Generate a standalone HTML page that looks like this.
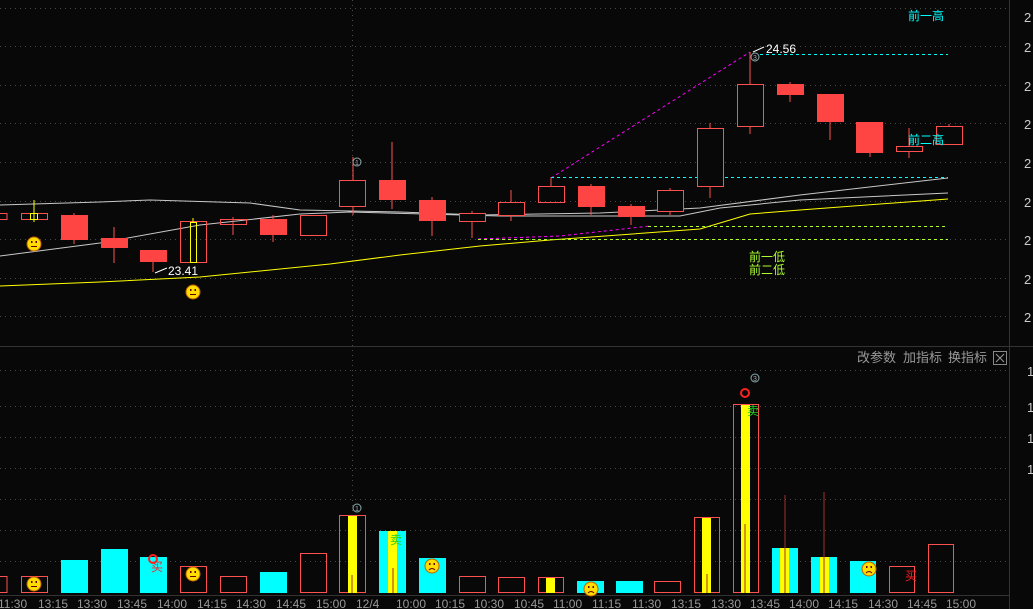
<!DOCTYPE html>
<html><head><meta charset="utf-8"><style>
html,body{margin:0;padding:0;background:#080808;overflow:hidden}
svg{display:block}
text{font-family:"Liberation Sans","Noto Sans CJK SC",sans-serif}
</style></head><body>
<svg width="1033" height="609" viewBox="0 0 1033 609" xmlns="http://www.w3.org/2000/svg">
<defs>
<g id="sm"><circle r="7" fill="#ffdd00" stroke="#c06000"/><rect x="-3" y="-3" width="1.5" height="2" fill="#600"/><rect x="1.5" y="-3" width="1.5" height="2" fill="#600"/><line x1="-3" y1="2.5" x2="3" y2="2.5" stroke="#600"/></g>
<g id="sd"><circle r="7" fill="#ffdd00" stroke="#c06000"/><rect x="-3" y="-3" width="1.5" height="2" fill="#600"/><rect x="1.5" y="-3" width="1.5" height="2" fill="#600"/><path d="M-3,4 Q0,1 3,4" fill="none" stroke="#600"/></g>
</defs>
<rect width="1033" height="609" fill="#080808"/>
<g stroke="#4a4a4a" stroke-dasharray="1,4" stroke-width="1">
<line x1="0" y1="8.5" x2="1009" y2="8.5"/><line x1="0" y1="46.5" x2="1009" y2="46.5"/>
<line x1="0" y1="85.5" x2="1009" y2="85.5"/><line x1="0" y1="123.5" x2="1009" y2="123.5"/>
<line x1="0" y1="162.5" x2="1009" y2="162.5"/><line x1="0" y1="201.5" x2="1009" y2="201.5"/>
<line x1="0" y1="239.5" x2="1009" y2="239.5"/><line x1="0" y1="278.5" x2="1009" y2="278.5"/>
<line x1="0" y1="316.5" x2="1009" y2="316.5"/>
<line x1="0" y1="370.5" x2="1009" y2="370.5"/><line x1="0" y1="406.5" x2="1009" y2="406.5"/>
<line x1="0" y1="437.5" x2="1009" y2="437.5"/><line x1="0" y1="468.5" x2="1009" y2="468.5"/>
<line x1="0" y1="499.5" x2="1009" y2="499.5"/><line x1="0" y1="530.5" x2="1009" y2="530.5"/>
<line x1="0" y1="561.5" x2="1009" y2="561.5"/>
<line x1="352.5" y1="0" x2="352.5" y2="595"/>
</g>
<line x1="1009.5" y1="0" x2="1009.5" y2="609" stroke="#333"/>
<line x1="0" y1="346.5" x2="1033" y2="346.5" stroke="#333"/>
<line x1="0" y1="595.5" x2="1009" y2="595.5" stroke="#333"/>
<g fill="#ccc" font-size="13"><text x="1024" y="52">2</text><text x="1024" y="91">2</text><text x="1024" y="129">2</text><text x="1024" y="168">2</text><text x="1024" y="207">2</text><text x="1024" y="245">2</text><text x="1024" y="284">2</text><text x="1024" y="322">2</text><text x="1024" y="22">2</text>
<text x="1027" y="376">1</text><text x="1027" y="412">1</text><text x="1027" y="443">1</text><text x="1027" y="474">1</text></g>
<polyline fill="none" stroke="#c8c8c8" points="0,205 100,202 150,200 250,203 300,210 400,212 480,215 600,213 700,208 800,195 948,178"/>
<polyline fill="none" stroke="#c8c8c8" points="0,256 100,243 200,225 300,214 350,212 500,216 680,216 720,208 800,200 948,193"/>
<polyline fill="none" stroke="#ffff00" points="0,286 100,282 200,277 330,264 400,255 480,246 550,240 700,229 750,214 800,210 948,199"/>
<g fill="none" stroke-dasharray="3,3">
<line x1="551" y1="178" x2="750" y2="52" stroke="#ff00ff"/>
<polyline points="478,239 560,236 650,226" stroke="#ff00ff"/>
<line x1="551" y1="177.5" x2="948" y2="177.5" stroke="#00ffff"/>
<line x1="760" y1="54.5" x2="948" y2="54.5" stroke="#00ffff"/>
<line x1="648" y1="226.5" x2="948" y2="226.5" stroke="#adff2f"/>
<line x1="478" y1="239.5" x2="948" y2="239.5" stroke="#adff2f"/>
</g>
<g stroke="#ff5050" fill="none">
<line x1="34" y1="200" x2="34" y2="222" stroke="#ffff00"/><rect x="21.5" y="213.5" width="26" height="6"/><rect x="30.5" y="213.5" width="7" height="6" stroke="#ffff00"/>
<rect x="-5" y="213.5" width="12" height="6"/>
<line x1="74" y1="213" x2="74" y2="244"/><rect x="61" y="215" width="27" height="25" fill="#ff4444" stroke="none"/>
<line x1="114" y1="227" x2="114" y2="263"/><rect x="101" y="238" width="27" height="10" fill="#ff4444" stroke="none"/>
<line x1="153" y1="250" x2="153" y2="272"/><rect x="140" y="250" width="27" height="12" fill="#ff4444" stroke="none"/>
<rect x="180.5" y="221.5" width="26" height="41"/><rect x="190.5" y="222.5" width="6" height="40" stroke="#ffff00"/><line x1="193" y1="218" x2="193" y2="222" stroke="#ffff00"/>
<line x1="233" y1="217" x2="233" y2="235"/><rect x="220.5" y="219.5" width="26" height="5"/>
<line x1="273" y1="215" x2="273" y2="242"/><rect x="260" y="219" width="27" height="16" fill="#ff4444" stroke="none"/>
<rect x="300.5" y="215.5" width="26" height="20"/>
<line x1="353" y1="157" x2="353" y2="215"/><rect x="339.5" y="180.5" width="26" height="26" fill="#080808"/>
<line x1="392" y1="142" x2="392" y2="209"/><rect x="379" y="180" width="27" height="20" fill="#ff4444" stroke="none"/>
<line x1="432" y1="197" x2="432" y2="236"/><rect x="419" y="200" width="27" height="21" fill="#ff4444" stroke="none"/>
<line x1="472" y1="211" x2="472" y2="238"/><rect x="459.5" y="213.5" width="26" height="8" fill="#080808"/>
<line x1="511" y1="190" x2="511" y2="221"/><rect x="498.5" y="202.5" width="26" height="13" fill="#080808"/>
<line x1="551" y1="177" x2="551" y2="186"/><rect x="538.5" y="186.5" width="26" height="16"/>
<line x1="591" y1="184" x2="591" y2="215"/><rect x="578" y="186" width="27" height="21" fill="#ff4444" stroke="none"/>
<line x1="631" y1="204" x2="631" y2="225"/><rect x="618" y="206" width="27" height="11" fill="#ff4444" stroke="none"/>
<line x1="670" y1="188" x2="670" y2="215"/><rect x="657.5" y="190.5" width="26" height="21" fill="#080808"/>
<line x1="710" y1="123" x2="710" y2="198"/><rect x="697.5" y="128.5" width="26" height="58" fill="#080808"/>
<line x1="750" y1="52" x2="750" y2="134"/><rect x="737.5" y="84.5" width="26" height="42" fill="#080808"/>
<line x1="790" y1="82" x2="790" y2="102"/><rect x="777" y="84" width="27" height="11" fill="#ff4444" stroke="none"/>
<line x1="830" y1="94" x2="830" y2="140"/><rect x="817" y="94" width="27" height="28" fill="#ff4444" stroke="none"/>
<line x1="870" y1="122" x2="870" y2="157"/><rect x="856" y="122" width="27" height="31" fill="#ff4444" stroke="none"/>
<line x1="909" y1="128" x2="909" y2="158"/><rect x="896.5" y="146.5" width="26" height="5" fill="#080808"/>
<line x1="949" y1="124" x2="949" y2="126"/><rect x="936.5" y="126.5" width="26" height="18"/>
</g>
<g font-size="12" fill="#fff"><text x="168" y="275">23.41</text><text x="766" y="53">24.56</text></g>
<path d="M155,273 L167,268" stroke="#fff"/><path d="M753,52 L764,47" stroke="#fff"/>
<g font-size="12" fill="#00ffff"><text x="908" y="20">前一高</text><text x="908" y="144">前二高</text></g>
<g font-size="12" fill="#adff2f"><text x="749" y="261">前一低</text><text x="749" y="274">前二低</text></g>
<g fill="none" stroke="#8aa"><circle cx="357" cy="162" r="4"/><circle cx="755" cy="57" r="4"/><circle cx="357" cy="508" r="4"/><circle cx="755" cy="378" r="4"/></g>
<g fill="#aab" font-size="7" text-anchor="middle"><text x="357" y="165">1</text><text x="755" y="60">3</text><text x="357" y="511">1</text><text x="755" y="381">3</text></g>
<use href="#sm" x="34" y="244"/><use href="#sm" x="193" y="292"/>
<g stroke="#ff5050" fill="none">
<rect x="-5" y="576.5" width="12" height="16"/>
<rect x="21.5" y="576.5" width="26" height="16"/>
<rect x="61" y="560" width="27" height="33" fill="#00ffff" stroke="none"/>
<rect x="101" y="549" width="27" height="44" fill="#00ffff" stroke="none"/>
<rect x="140" y="557" width="27" height="36" fill="#00ffff" stroke="none"/>
<rect x="180.5" y="566.5" width="26" height="26"/>
<rect x="220.5" y="576.5" width="26" height="16"/>
<rect x="260" y="572" width="27" height="21" fill="#00ffff" stroke="none"/>
<rect x="300.5" y="553.5" width="26" height="39"/>
<rect x="339.5" y="515.5" width="26" height="77"/><rect x="348" y="516" width="9" height="77" fill="#ffff00" stroke="none"/><line x1="352" y1="575" x2="352" y2="593" stroke="#a03030"/>
<rect x="379" y="531" width="27" height="62" fill="#00ffff" stroke="none"/><rect x="388" y="531" width="9" height="62" fill="#ffff00" stroke="none"/><line x1="393" y1="568" x2="393" y2="593" stroke="#a03030"/>
<rect x="419" y="558" width="27" height="35" fill="#00ffff" stroke="none"/>
<rect x="459.5" y="576.5" width="26" height="16"/>
<rect x="498.5" y="577.5" width="26" height="15"/>
<rect x="538.5" y="577.5" width="25" height="15"/><rect x="546" y="578" width="9" height="15" fill="#ffff00" stroke="none"/>
<rect x="577" y="581" width="27" height="12" fill="#00ffff" stroke="none"/>
<rect x="616" y="581" width="27" height="12" fill="#00ffff" stroke="none"/>
<rect x="654.5" y="581.5" width="26" height="11"/>
<rect x="694.5" y="517.5" width="25" height="75"/><rect x="702" y="518" width="9" height="75" fill="#ffff00" stroke="none"/><line x1="707" y1="574" x2="707" y2="593" stroke="#a03030"/>
<rect x="733.5" y="404.5" width="25" height="188"/><rect x="741" y="405" width="9" height="188" fill="#ffff00" stroke="none"/><line x1="745" y1="524" x2="745" y2="593" stroke="#a03030"/>
<rect x="772" y="548" width="26" height="45" fill="#00ffff" stroke="none"/><rect x="780" y="548" width="9" height="45" fill="#ffff00" stroke="none"/><line x1="785" y1="495" x2="785" y2="593" stroke="#a03030"/>
<rect x="811" y="557" width="26" height="36" fill="#00ffff" stroke="none"/><rect x="820" y="557" width="9" height="36" fill="#ffff00" stroke="none"/><line x1="824" y1="492" x2="824" y2="593" stroke="#a03030"/>
<rect x="850" y="561" width="26" height="32" fill="#00ffff" stroke="none"/>
<rect x="889.5" y="566.5" width="25" height="26"/>
<rect x="928.5" y="544.5" width="25" height="48"/>
</g>
<use href="#sm" x="34" y="584"/><use href="#sm" x="193" y="574"/><use href="#sd" x="432" y="566"/><use href="#sd" x="591" y="589"/><use href="#sd" x="869" y="569"/>
<circle cx="153" cy="559" r="4" fill="none" stroke="#ff2020" stroke-width="2"/>
<circle cx="745" cy="393" r="4" fill="none" stroke="#ff2020" stroke-width="2"/>
<g font-size="12"><text x="151" y="571" fill="#ff2020">买</text><text x="905" y="580" fill="#ff2020">买</text><text x="390" y="544" fill="#20d020">卖</text><text x="747" y="415" fill="#20d020">卖</text></g>
<g font-size="13" fill="#999"><text x="857" y="362">改参数</text><text x="903" y="362">加指标</text><text x="948" y="362">换指标</text></g>
<rect x="993.5" y="351.5" width="13" height="13" fill="none" stroke="#888"/><path d="M996,354 L1004,362 M1004,354 L996,362" stroke="#999"/>
<g font-size="12" fill="#999">
<text x="-2" y="608">11:30</text><text x="38" y="608">13:15</text><text x="77" y="608">13:30</text><text x="117" y="608">13:45</text><text x="157" y="608">14:00</text><text x="197" y="608">14:15</text><text x="236" y="608">14:30</text><text x="276" y="608">14:45</text><text x="316" y="608">15:00</text><text x="356" y="608">12/4</text><text x="396" y="608">10:00</text><text x="435" y="608">10:15</text><text x="474" y="608">10:30</text><text x="514" y="608">10:45</text><text x="553" y="608">11:00</text><text x="592" y="608">11:15</text><text x="632" y="608">11:30</text><text x="671" y="608">13:15</text><text x="711" y="608">13:30</text><text x="750" y="608">13:45</text><text x="789" y="608">14:00</text><text x="828" y="608">14:15</text><text x="868" y="608">14:30</text><text x="907" y="608">14:45</text><text x="946" y="608">15:00</text>
</g>
</svg>
</body></html>
